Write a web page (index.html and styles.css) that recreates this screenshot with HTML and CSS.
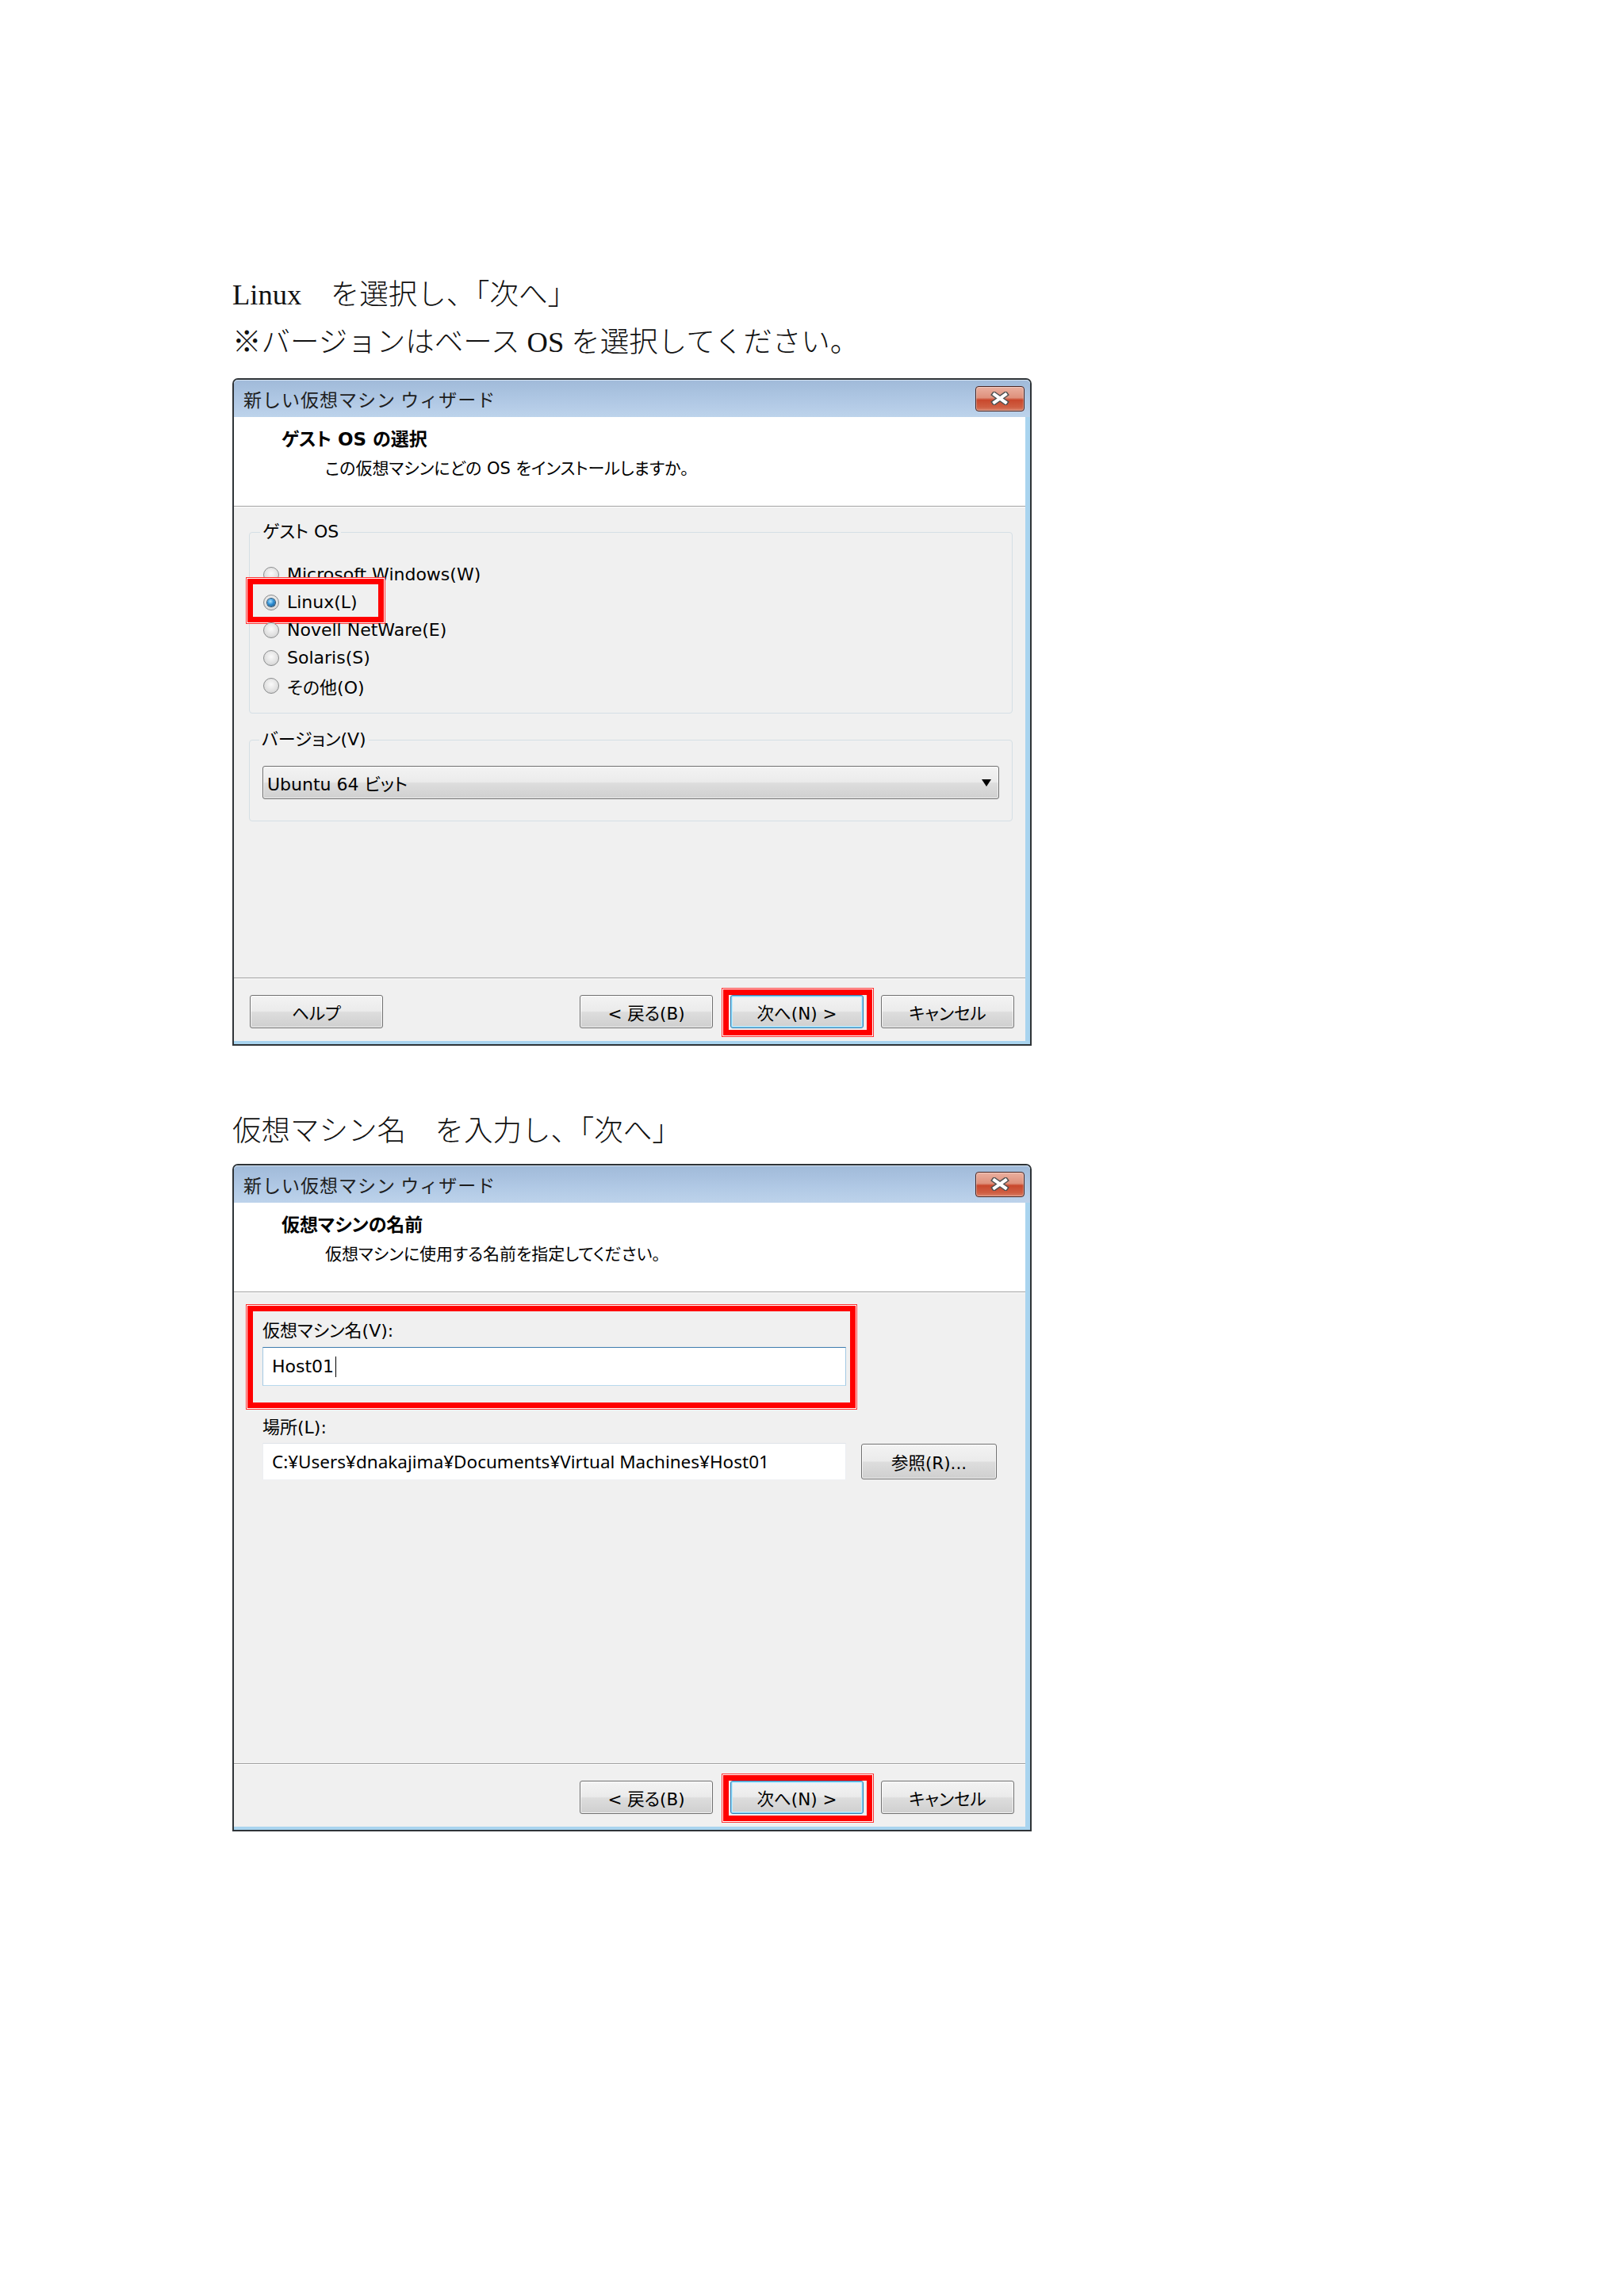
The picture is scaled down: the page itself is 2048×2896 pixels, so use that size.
FILE: index.html
```html
<!DOCTYPE html>
<html lang="ja">
<head>
<meta charset="utf-8">
<title>新しい仮想マシン ウィザード</title>
<link rel="stylesheet" href="styles.css">
</head>
<body>
<div class="page">
  <p class="doc">Linux　を選択し<span class="h">、</span>「次へ」</p>
  <p class="doc">※バージョンはベース OS を選択してください。</p>

  <div class="dialog d1">
    <div class="titlebar">
      <span class="title">新しい仮想マシン ウィザード</span>
      <span class="close"><svg width="24" height="17" viewBox="0 0 24 17"><path d="M5 3.5 L19 13.5 M19 3.5 L5 13.5" stroke="#505050" stroke-width="7" stroke-linecap="square"/><path d="M5 3.5 L19 13.5 M19 3.5 L5 13.5" stroke="#ffffff" stroke-width="4" stroke-linecap="square"/></svg></span>
    </div>
    <div class="client">
      <div class="header">
        <div class="h-title">ゲスト OS の選択</div>
        <div class="h-sub">この仮想マシンにどの OS をインストールしますか。</div>
      </div>
      <div class="sep"></div>
      <div class="body">
        <fieldset class="group g-os">
          <legend>ゲスト OS</legend>
          <div class="radio"><span class="rb"></span><span>Microsoft Windows(W)</span></div>
          <div class="radio"><span class="rb on"></span><span>Linux(L)</span><span class="mark-linux"></span></div>
          <div class="radio"><span class="rb"></span><span>Novell NetWare(E)</span></div>
          <div class="radio"><span class="rb"></span><span>Solaris(S)</span></div>
          <div class="radio"><span class="rb"></span><span>その他(O)</span></div>
        </fieldset>
        <fieldset class="group g-ver">
          <legend>バージョン(V)</legend>
          <div class="combo"><span>Ubuntu 64 ビット</span><span class="arrow"></span></div>
        </fieldset>
      </div>
      <div class="sep"></div>
      <div class="footer">
        <button class="btn">ヘルプ</button>
        <span class="spacer"></span>
        <button class="btn">&lt; 戻る(B)</button>
        <span class="mk"><button class="btn def">次へ(N) &gt;</button></span>
        <button class="btn">キャンセル</button>
      </div>
    </div>
  </div>

  <p class="doc doc-gap">仮想マシン名　を入力し<span class="h">、</span>「次へ」</p>

  <div class="dialog d2">
    <div class="titlebar">
      <span class="title">新しい仮想マシン ウィザード</span>
      <span class="close"><svg width="24" height="17" viewBox="0 0 24 17"><path d="M5 3.5 L19 13.5 M19 3.5 L5 13.5" stroke="#505050" stroke-width="7" stroke-linecap="square"/><path d="M5 3.5 L19 13.5 M19 3.5 L5 13.5" stroke="#ffffff" stroke-width="4" stroke-linecap="square"/></svg></span>
    </div>
    <div class="client">
      <div class="header">
        <div class="h-title">仮想マシンの名前</div>
        <div class="h-sub">仮想マシンに使用する名前を指定してください。</div>
      </div>
      <div class="sep"></div>
      <div class="body body2">
        <div class="hl">
          <div class="field-label">仮想マシン名(V):</div>
          <div class="input focus"><span>Host01</span><span class="caret"></span></div>
        </div>
        <div class="field-label loc-label">場所(L):</div>
        <div class="loc-row">
          <div class="input loc"><span>C:¥Users¥dnakajima¥Documents¥Virtual Machines¥Host01</span></div>
          <button class="btn browse">参照(R)...</button>
        </div>
      </div>
      <div class="sep"></div>
      <div class="footer">
        <span class="spacer"></span>
        <button class="btn">&lt; 戻る(B)</button>
        <span class="mk"><button class="btn def">次へ(N) &gt;</button></span>
        <button class="btn">キャンセル</button>
      </div>
    </div>
  </div>
</div>
</body>
</html>
```
FILE: styles.css
```css
html, body {
  margin: 0;
  padding: 0;
  background: #ffffff;
}
body {
  width: 2048px;
  min-height: 2896px;
}
.page {
  padding: 342px 0 0 293px;
}
.doc {
  margin: 0;
  font-family: "Liberation Serif", "Noto Sans CJK JP", serif;
  font-size: 36.5px;
  line-height: 60px;
  color: #111;
  font-weight: 300;
  text-spacing-trim: space-all;
}
.doc .h {
  font-feature-settings: "halt";
}
.doc-gap {
  margin-top: 78px;
  margin-bottom: 11px;
}
.d1 {
  margin-top: 15px;
}

/* dialog window */
.dialog {
  box-sizing: border-box;
  width: 1008px;
  height: 842px;
  border: 2px solid #2f3438;
  border-radius: 7px 7px 0 0;
  background: #a9d4ef;
  display: flex;
  flex-direction: column;
  font-family: "DejaVu Sans", "Noto Sans CJK JP", sans-serif;
  font-size: 22px;
  color: #000;
}
.titlebar {
  flex: none;
  height: 47px;
  display: flex;
  align-items: center;
  justify-content: space-between;
  padding: 0 7px 0 12px;
  background: linear-gradient(#a0bad9, #b1c9e5 60%, #bdd3eb);
  border-radius: 5px 5px 0 0;
  box-shadow: inset 0 1px 0 #d4e2f1;
}
.title {
  font-family: "Noto Sans CJK JP", sans-serif;
  font-size: 23px;
  color: #1e1e1e;
  letter-spacing: 1px;
}
.close {
  width: 62px;
  height: 32px;
  box-sizing: border-box;
  border: 1px solid #4b2420;
  border-radius: 4px;
  background: linear-gradient(#eab0a0 0%, #df917c 45%, #c9482d 55%, #cf5f43 85%, #d9826a 100%);
  box-shadow: inset 0 0 0 1px rgba(255, 255, 255, 0.35);
  display: flex;
  align-items: center;
  justify-content: center;
}
.client {
  flex: 1;
  margin: 0 6px 4px 0;
  background: #f0f0f0;
  display: flex;
  flex-direction: column;
}
.header {
  flex: none;
  height: 112px;
  box-sizing: border-box;
  background: #ffffff;
  padding: 13px 0 0 60px;
}
.h-title {
  font-weight: 700;
  font-size: 23px;
  line-height: 30px;
  font-feature-settings: "palt";
}
.h-sub {
  font-size: 21px;
  line-height: 30px;
  margin: 7px 0 0 55px;
  font-feature-settings: "palt";
}
.sep {
  flex: none;
  height: 0;
  border-top: 1px solid #a0a0a0;
  border-bottom: 1px solid #ffffff;
}
.body {
  flex: 1;
}

/* group boxes */
.group {
  position: relative;
  margin: 0 16px 0 19px;
  padding: 21px 16px 17px 17px;
  border: 1px solid #d5dfe5;
  border-radius: 4px;
  min-width: 0;
}
.g-os {
  margin-top: 16px;
}
.g-ver {
  margin-top: 18px;
  padding: 18px 16px 27px 16px;
}
.group legend {
  padding: 0 3px;
  margin-left: -4px;
  line-height: 30px;
  font-feature-settings: "palt";
}
.radio {
  position: relative;
  display: flex;
  align-items: center;
  gap: 10px;
  height: 35px;
  font-feature-settings: "palt";
}
.rb {
  flex: none;
  width: 20px;
  height: 20px;
  box-sizing: border-box;
  border-radius: 50%;
  border: 1px solid #8a8c8d;
  background: radial-gradient(circle at 50% 40%, #fafafa 0, #e2e2e2 55%, #c9c9c9 100%);
  display: flex;
  align-items: center;
  justify-content: center;
}
.rb.on::after {
  content: "";
  width: 10px;
  height: 10px;
  border-radius: 50%;
  background: radial-gradient(circle at 40% 35%, #aee4ff 0, #2f8fd4 45%, #0c4473 100%);
  box-shadow: 0 0 0 1px #29506f;
}
.mark-linux {
  position: absolute;
  left: -20px;
  top: -12px;
  width: 172px;
  height: 55px;
  box-sizing: border-box;
  border: 7px solid #ff0000;
  outline: 1px solid #ff3030;
  outline-offset: 1px;
  box-shadow: 0 0 0 1px #ffffff;
}
.combo {
  height: 42px;
  box-sizing: border-box;
  border: 1px solid #707070;
  border-radius: 3px;
  background: linear-gradient(#f3f3f3 0, #ebebeb 48%, #dddddd 52%, #d0d0d0 100%);
  box-shadow: inset 0 0 0 1px rgba(255, 255, 255, 0.6);
  display: flex;
  align-items: center;
  justify-content: space-between;
  padding: 0 9px 0 5px;
  font-feature-settings: "palt";
}
.arrow {
  width: 0;
  height: 0;
  border-left: 6px solid transparent;
  border-right: 6px solid transparent;
  border-top: 9px solid #000;
}

/* footer buttons */
.footer {
  flex: none;
  height: 78px;
  box-sizing: border-box;
  padding: 20px 14px 0 20px;
  display: flex;
  align-items: flex-start;
  gap: 22px;
}
.spacer {
  flex: 1;
}
.btn {
  width: 168px;
  height: 42px;
  box-sizing: border-box;
  border: 1px solid #707070;
  border-radius: 3px;
  background: linear-gradient(#f3f3f3 0, #ebebeb 48%, #dddddd 52%, #cfcfcf 100%);
  box-shadow: inset 0 0 0 1px rgba(255, 255, 255, 0.7);
  font-family: inherit;
  font-size: 21.5px;
  color: #000;
  padding: 0;
  margin: 0;
  display: flex;
  align-items: center;
  justify-content: center;
  font-feature-settings: "palt";
}
.btn.def {
  border-color: #3c7fb1;
  box-shadow: inset 0 0 0 1px #7fd3f7, inset 0 0 0 2px #c4ebfb;
}
.mk {
  position: relative;
  display: block;
}
.mk::after {
  content: "";
  position: absolute;
  left: -9px;
  right: -11px;
  top: -7px;
  bottom: -9px;
  border: 7px solid #ff0000;
  outline: 1px solid #ff3030;
  outline-offset: 1px;
  box-shadow: 0 0 0 1px #ffffff;
  pointer-events: none;
}

/* dialog 2 fields */
.body2 {
  padding: 16px 0 0 36px;
}
.hl {
  width: 767px;
  box-sizing: border-box;
  margin-left: -19px;
  border: 7px solid #ff0000;
  outline: 1px solid #ff3030;
  outline-offset: 1px;
  box-shadow: 0 0 0 1px #ffffff;
  padding: 11px 5px 21px 12px;
}
.field-label {
  line-height: 28px;
  font-feature-settings: "palt";
}
.input {
  width: 736px;
  height: 49px;
  box-sizing: border-box;
  margin-top: 6px;
  background: #ffffff;
  border: 1px solid;
  border-color: #3d7bad #a4c9e3 #b7d9ed #a4c9e3;
  display: flex;
  align-items: center;
  padding-left: 11px;
}
.caret {
  display: inline-block;
  width: 1px;
  height: 26px;
  background: #000;
  margin-left: 2px;
}
.loc-label {
  margin-top: 11px;
}
.loc-row {
  display: flex;
  align-items: center;
  gap: 19px;
  margin-top: 5px;
}
.input.loc {
  height: 47px;
  margin-top: 0;
  font-family: "Noto Sans", "Noto Sans CJK JP", sans-serif;
  font-size: 22.5px;
  border-color: #dfe2e8 #eceef2 #eef1f4 #eceef2;
}
.btn.browse {
  width: 171px;
  height: 45px;
}
```
